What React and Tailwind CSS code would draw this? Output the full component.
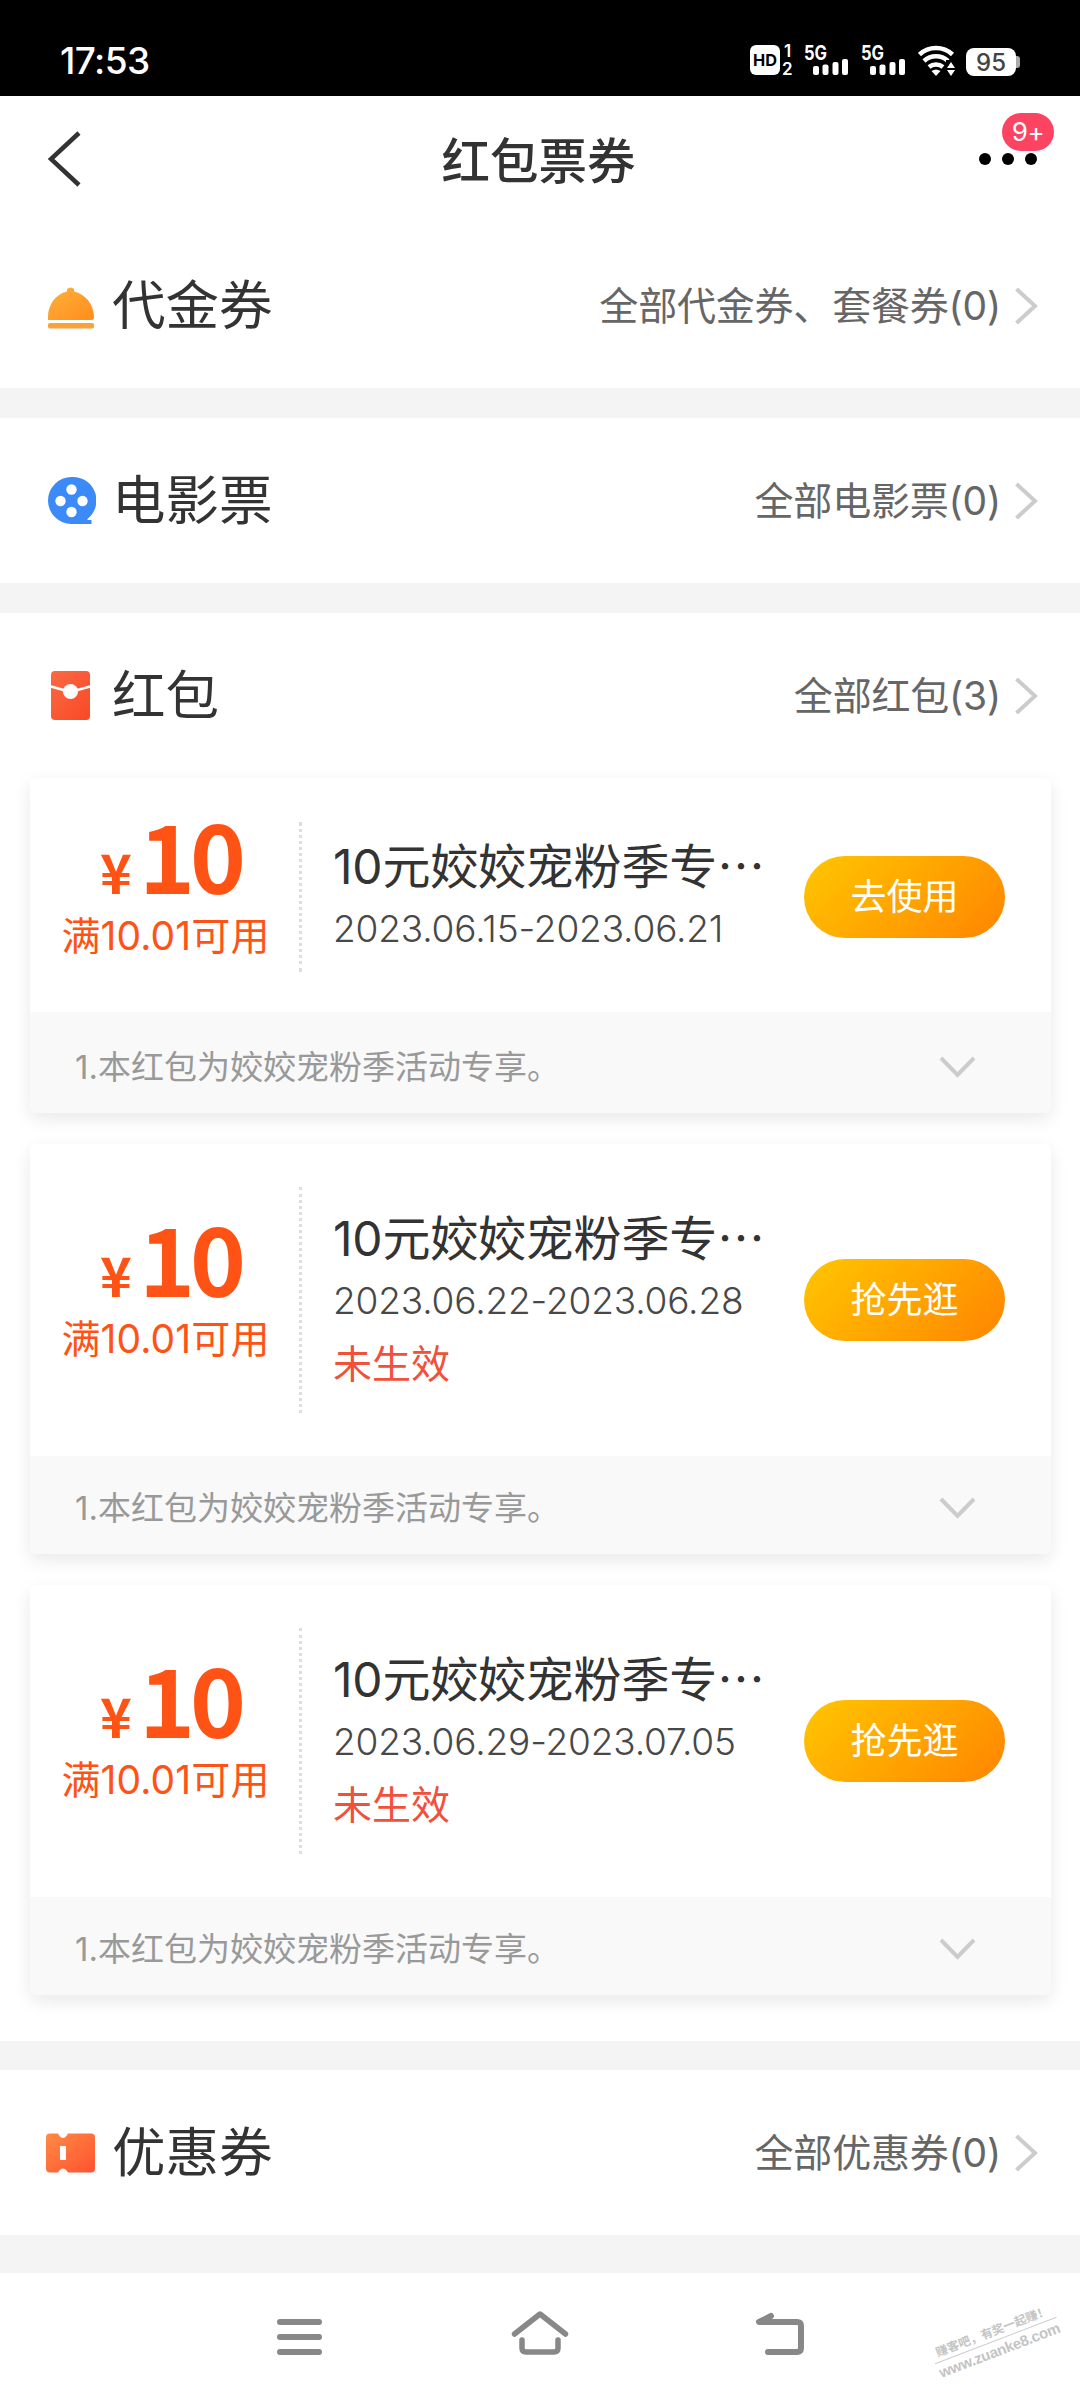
const coupons = [
  { date: "2023.06.15-2023.06.21", action: "去使用", status: "" },
  { date: "2023.06.22-2023.06.28", action: "抢先逛", status: "未生效" },
  { date: "2023.06.29-2023.07.05", action: "抢先逛", status: "未生效" },
];

function Signal() {
  return (
    <svg className="overflow-visible" width="46" height="32" viewBox="0 0 46 32" fill="#fff">
      <text x="0" y="15.500" fontSize="19.500" fontWeight="700" fontFamily="Inter" textLength="23" lengthAdjust="spacingAndGlyphs">
        5G
      </text>
      <rect x="9" y="22" width="6" height="9" rx="2" />
      <rect x="18.500" y="20.500" width="6" height="10.500" rx="2" />
      <rect x="28.500" y="18" width="6" height="13" rx="2" />
      <rect x="38" y="15" width="6" height="16" rx="2" />
    </svg>
  );
}

function StatusBar() {
  return (
    <div className="h-24 bg-black text-white flex items-start justify-between pl-[60px] pr-[60px] pt-[44px]">
      <span className="text-[37px] leading-[34px] font-medium tracking-[-0.6px]">17:53</span>
      <div className="flex">
        <svg width="54" height="32" viewBox="0 0 54 32" className="overflow-visible">
          <rect x="0" y="1" width="30" height="30" rx="6" fill="#fff" />
          <text x="3" y="22" fontSize="16.500" fontWeight="700" fontFamily="Inter" textLength="24" lengthAdjust="spacingAndGlyphs">
            HD
          </text>
          <g fill="#fff" fontSize="17" fontWeight="600" fontFamily="Inter">
            <text x="34" y="13">1</text>
            <text x="32" y="31">2</text>
          </g>
        </svg>
        <div className="w-[57px]">
          <Signal />
        </div>
        <div className="w-[57px]">
          <Signal />
        </div>
        <svg className="mr-[11px]" width="37" height="32" viewBox="0 0 37 32">
          <g fill="none" stroke="#fff" strokeWidth="4.500">
            <path d="M1.5 10.500a24 24 0 0 1 33 0" />
            <path d="M6 17a17.5 17.5 0 0 1 24 0" />
            <path d="M11 23a11 11 0 0 1 14 0" />
          </g>
          <path d="M13.500 27q4.500-3 9 0L18 32z" fill="#fff" />
          <path d="M28 16h9v16h-9z" fill="#000" />
          <path d="M29 24l4-6 4 6zM29 26h8l-4 6z" fill="#fff" />
        </svg>
        <div className="flex items-center mt-[4px] h-[28px]">
          <span className="w-[50px] h-[28px] rounded-[8px] bg-white text-[#444] text-[24px] leading-[29px] font-medium text-center">
            95
          </span>
          <span className="w-[4px] h-[12px] rounded-r-[3px] bg-[#aaa]" />
        </div>
      </div>
    </div>
  );
}

function Header() {
  return (
    <div className="h-[127px] flex items-center justify-between pl-[48px] pr-[43px]">
      <svg width="34" height="58" viewBox="0 0 34 58" fill="none" stroke="#333" strokeWidth="4.500">
        <path d="M31 2L3 28l28 26" />
      </svg>
      <h1 className="text-[48.5px] leading-[60px] font-medium text-[#333] ml-[16px] mt-[5px]">红包票券</h1>
      <div className="relative w-[58px] h-[12px] flex gap-[11px] -mt-[2px]">
        <span className="w-[12px] h-[12px] rounded-full bg-black" />
        <span className="w-[12px] h-[12px] rounded-full bg-black" />
        <span className="w-[12px] h-[12px] rounded-full bg-black" />
        <span className="absolute left-[23px] -top-[40px] w-[52px] h-[38px] rounded-full bg-[#fc4462] text-white text-[26px] leading-[38px] text-center tracking-[-0.5px]">
          9+
        </span>
      </div>
    </div>
  );
}

function VoucherIcon() {
  return (
    <svg width="48" height="52" viewBox="0 0 48 52">
      <defs>
        <linearGradient id="bell" x1="0" y1="0" x2="1" y2="1">
          <stop offset="0" stopColor="#ffb13c" />
          <stop offset="1" stopColor="#ff8d1c" />
        </linearGradient>
      </defs>
      <path d="M0 40V37C0 24 8 14 19 11.500V9q4-3 7 0v2.500C37 14 46 24 46 37q0 3-2.500 3z" fill="url(#bell)" />
      <rect x="0" y="43" width="46" height="5.500" rx="2" fill="#fca13a" />
    </svg>
  );
}

function MovieIcon() {
  return (
    <svg width="48" height="52" viewBox="0 0 48 52">
      <path d="M23.500 2a23.500 23.500 0 0 1 16.500 41.500q-1.500 1.500 0 1.500h3.500v4h-20a23.500 23.500 0 0 1 0-47z" fill="#3c8af8" />
      <g fill="#fff">
        <circle cx="23.500" cy="14.500" r="5.200" />
        <circle cx="12.500" cy="26" r="5.200" />
        <circle cx="34.500" cy="26" r="5.200" />
        <circle cx="23.500" cy="37" r="5.200" />
      </g>
    </svg>
  );
}

function PacketIcon() {
  return (
    <svg width="48" height="52" viewBox="0 0 48 52">
      <defs>
        <linearGradient id="packet" x1="0" y1="0" x2="1" y2="1">
          <stop offset="0" stopColor="#fa6a45" />
          <stop offset="1" stopColor="#fa4826" />
        </linearGradient>
      </defs>
      <rect x="3" y="1" width="39" height="49" rx="4" fill="url(#packet)" />
      <path d="M3 16.500L22.500 22 42 16.500" fill="none" stroke="#fff" strokeWidth="2.600" />
      <circle cx="22.500" cy="21.500" r="7.600" fill="#fff" />
    </svg>
  );
}

function TicketIcon() {
  return (
    <svg width="48" height="52" viewBox="0 0 48 52" className="-ml-[2px] mr-[2px] overflow-visible">
      <defs>
        <linearGradient id="ticket" x1="0" y1="0" x2="1" y2="1">
          <stop offset="0" stopColor="#ff8a44" />
          <stop offset="1" stopColor="#ff5230" />
        </linearGradient>
      </defs>
      <path d="M4 6.500h8q5 9 10 0h23q4 0 4 4v31q0 4-4 4H22q-5-8-10 0H4q-4 0-4-4v-31q0-4 4-4z" fill="url(#ticket)" />
      <rect x="14" y="19" width="6" height="14" fill="#fff" />
    </svg>
  );
}

function SectionRow({ icon, title, more }) {
  return (
    <div className="h-[165px] flex items-center justify-between pl-[48px] pr-[42px]">
      <div className="flex items-center">
        {icon}
        <h2 className="ml-[16px] text-[53.5px] leading-[64px] text-[#333]">{title}</h2>
      </div>
      <div className="flex items-center text-[39px] leading-[48px] tracking-[-0.2px] text-[#666]">
        <span>{more}</span>
        <svg className="ml-[14px]" width="23" height="38" viewBox="0 0 23 38" fill="none" stroke="#ccc" strokeWidth="4">
          <path d="M1.500 2L20 19 1.500 36" />
        </svg>
      </div>
    </div>
  );
}

function CouponCard({ date, action, status }) {
  return (
    <div className="rounded-[6px] bg-white shadow-[0_6px_18px_rgba(0,0,0,0.09)]">
      <div className={status ? "h-[312px] flex items-center" : "h-[234px] flex items-center pt-[4px]"}>
        {/* Amount */}
        <div className="w-[269px] pl-[4px] text-center text-[#ff5316]">
          <div className="font-['Noto_Sans_CJK_SC'] font-bold flex items-baseline justify-center h-[77px] leading-[67px] pl-[8px]">
            <span className="text-[54px] mr-[7px]">¥</span>
            <span className="text-[95px] tracking-[-5px]">10</span>
          </div>
          <div className="text-[39px] leading-[79px] tracking-[0.1px] whitespace-nowrap -ml-[2px]">满10.01可用</div>
        </div>
        <div
          className={
            status
              ? "h-[226px] border-l-[3px] border-dotted border-[#ddd]"
              : "h-[150px] border-l-[3px] border-dotted border-[#ddd]"
          }
        />
        {/* Name and validity */}
        <div className="w-[470px] pl-[31px] -mt-[2px] whitespace-nowrap">
          <div className="text-[48px] leading-[62px] tracking-[-0.2px] text-[#333]">
            10元姣姣宠粉季专<span className="font-['Noto_Sans_CJK_SC']">…</span>
          </div>
          <div className="text-[37px] leading-[62px] font-light tracking-[-0.15px] text-[#484848]">{date}</div>
          {status && <div className="text-[39px] leading-[63px] text-[#f1503b]">{status}</div>}
        </div>
        <button className="ml-[32px] w-[201px] h-[82px] rounded-full bg-linear-135 from-[#ffc600] to-[#ff8400] text-white text-[36px]">
          {action}
        </button>
      </div>
      <div
        className={
          status
            ? "h-[98px] rounded-b-[6px] bg-[#f9f9f9] flex items-center justify-between pl-[45px] pr-[75px] pt-[6px]"
            : "h-[101px] rounded-b-[6px] bg-[#f9f9f9] flex items-center justify-between pl-[45px] pr-[75px] pt-[9px]"
        }
      >
        <span className="text-[33px] leading-[48px] text-[#999]">1.本红包为姣姣宠粉季活动专享。</span>
        <svg width="37" height="24" viewBox="0 0 37 24" fill="none" stroke="#ccc" strokeWidth="4">
          <path d="M2 3l16.500 17L35 3" />
        </svg>
      </div>
    </div>
  );
}

function NavBar() {
  return (
    <div className="relative h-[127px] bg-white flex pt-[34px] pl-[275px]">
      <svg width="50" height="50" viewBox="0 0 50 50" fill="none" stroke="#888" strokeWidth="6" strokeLinecap="round">
        <path d="M5 15h39M5 30h39M5 45h39" />
      </svg>
      <svg className="ml-[185px]" width="60" height="50" viewBox="0 0 60 50" fill="none" stroke="#888" strokeWidth="5.500" strokeLinecap="round" strokeLinejoin="round">
        <path d="M4.500 27L30 7l25.500 20" />
        <path d="M12 33v8q0 4 4 4h28q4 0 4-4v-8" />
      </svg>
      <svg className="ml-[185px]" width="55" height="50" viewBox="0 0 55 50" fill="none" stroke="#888" strokeWidth="6" strokeLinecap="round" strokeLinejoin="round">
        <path d="M16 9L4 15h38q4 0 4 4v22q0 4-4 4H13" />
      </svg>
      <div className="absolute left-[931px] top-[49px] w-[130px] -rotate-[21deg] text-[#c4c4c4] text-center whitespace-nowrap">
        <div className="text-[12px] leading-[18px] font-bold border-b border-[#ccc]">赚客吧，有奖一起赚！</div>
        <div className="text-[15px] leading-[19px] font-bold font-['Liberation_Sans'] tracking-[-0.3px]">www.zuanke8.com</div>
      </div>
    </div>
  );
}

export default function App() {
  return (
    <div className="w-[1080px] h-[2400px] overflow-hidden bg-[#f4f4f4] font-[Inter,'Noto_Sans_CJK_SC',sans-serif]">
      <StatusBar />
      <div className="bg-white">
        <Header />
        <SectionRow icon={<VoucherIcon />} title="代金券" more="全部代金券、套餐券(0)" />
      </div>
      <div className="mt-[30px] bg-white">
        <SectionRow icon={<MovieIcon />} title="电影票" more="全部电影票(0)" />
      </div>
      <div className="mt-[30px] bg-white">
        <SectionRow icon={<PacketIcon />} title="红包" more="全部红包(3)" />
        <div className="flex flex-col gap-[31px] pl-[30px] pr-[29px] pb-[46px]">
          {coupons.map((coupon) => (
            <CouponCard key={coupon.date} {...coupon} />
          ))}
        </div>
      </div>
      <div className="mt-[29px] mb-[38px] bg-white">
        <SectionRow icon={<TicketIcon />} title="优惠券" more="全部优惠券(0)" />
      </div>
      <NavBar />
    </div>
  );
}
